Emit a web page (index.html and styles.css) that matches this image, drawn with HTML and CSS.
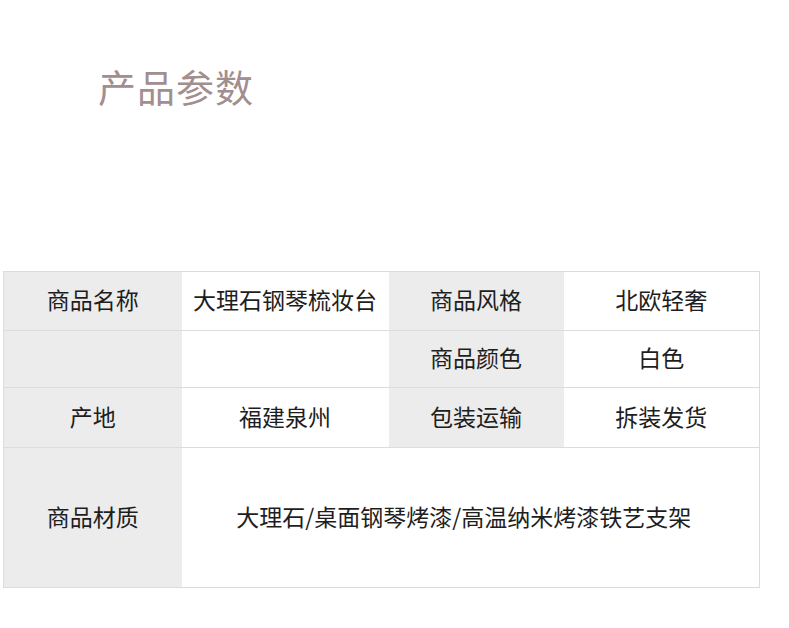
FILE: index.html
```html
<!DOCTYPE html>
<html lang="zh">
<head>
<meta charset="utf-8">
<link rel="stylesheet" href="styles.css">
</head>
<body>
<div class="page">
  <h1 class="title">产品参数</h1>
  <table class="params">
    <colgroup>
      <col class="c1"><col class="c2"><col class="c3"><col class="c4">
    </colgroup>
    <tr class="r1">
      <td class="key">商品名称</td>
      <td class="val">大理石钢琴梳妆台</td>
      <td class="key">商品风格</td>
      <td class="val">北欧轻奢</td>
    </tr>
    <tr class="r2">
      <td class="key"></td>
      <td class="val"></td>
      <td class="key">商品颜色</td>
      <td class="val">白色</td>
    </tr>
    <tr class="r3">
      <td class="key">产地</td>
      <td class="val">福建泉州</td>
      <td class="key">包装运输</td>
      <td class="val">拆装发货</td>
    </tr>
    <tr class="r4">
      <td class="key">商品材质</td>
      <td class="val wide" colspan="3">大理石/桌面钢琴烤漆/高温纳米烤漆铁艺支架</td>
    </tr>
  </table>
</div>
</body>
</html>
```
FILE: styles.css
```css
html, body {
  margin: 0;
  padding: 0;
  background: #fff;
}
.page {
  padding: 0 0 0 3px;
  font-family: "Noto Sans CJK SC", "Noto Sans", sans-serif;
}
.title {
  margin: 0;
  padding: 60px 0 0 95px;
  height: 271px;
  box-sizing: border-box;
  font-size: 38px;
  font-weight: 400;
  line-height: 52px;
  color: #a28e8e;
  letter-spacing: 1px;
}
.params {
  border-collapse: collapse;
  table-layout: fixed;
  width: 757px;
  border: 1px solid #dcdcdc;
}
.c1 { width: 178px; }
.c2 { width: 207px; }
.c3 { width: 175px; }
.c4 { width: 196px; }
.params td {
  padding: 0 0 4px;
  text-align: center;
  font-size: 23px;
  color: #1e1e1e;
  border-top: 1px solid #dcdcdc;
}
.params .key { background: #ececec; }
.params .val { background: #fff; }
.params .wide { padding-right: 13px; }
.r1 td { height: 54px; }
.r2 td { height: 52px; }
.r3 td { height: 55px; }
.r4 td { height: 135px; }
```
